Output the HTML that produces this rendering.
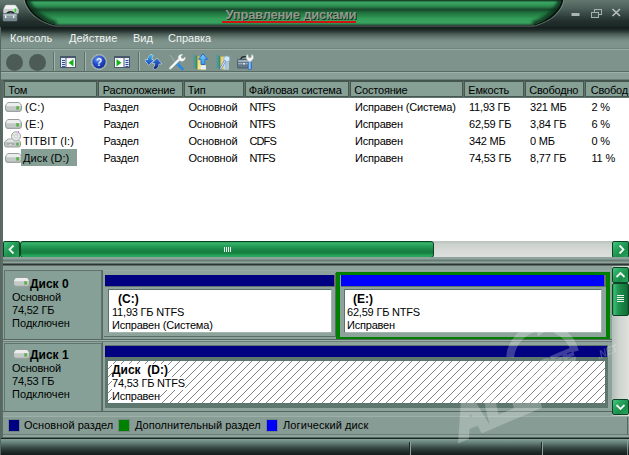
<!DOCTYPE html>
<html lang="ru">
<head>
<meta charset="utf-8">
<title>Управление дисками</title>
<style>
html,body{margin:0;padding:0;}
body{width:629px;height:455px;overflow:hidden;position:relative;background:#7d938c;
  font-family:"Liberation Sans","DejaVu Sans",sans-serif;font-size:11px;color:#000;letter-spacing:-0.2px;}
.abs,.abs-all *{position:absolute;}
div,span,svg{position:absolute;box-sizing:border-box;}
.t{white-space:nowrap;line-height:13px;height:13px;}

/* title bar */
#title{left:0;top:0;width:629px;height:27px;background:linear-gradient(180deg,#63776f 0%,#4f625c 28%,#33433f 58%,#222e2b 80%,#1d2926 96%,#161f1d 100%);}
#menugrad{left:0;top:27px;width:629px;height:16px;background:linear-gradient(180deg,#131c1a 0,#1f2b28 3px,#33423e 5px,#4a5a55 7px,#64776f 10px,#778d86 13px,#7d938c 16px);}
#titletext{left:225.5px;top:7px;font-weight:bold;font-size:13px;color:#8f9a8b;letter-spacing:-0.25px;line-height:15px;text-shadow:1px 1px 0 #15301f;}
#titleline{left:222px;top:21px;width:134px;height:2px;background:#d0140f;}

/* menu */
.menu{top:32px;color:#eef3f1;letter-spacing:0;}

/* toolbar */
#tbtop{left:1px;top:48px;width:628px;height:2px;background:linear-gradient(180deg,#6f847d 0,#6f847d 1px,#99ada5 1px,#99ada5 2px);}
#tbbot{left:1px;top:71px;width:628px;height:9px;background:linear-gradient(180deg,#586a64 0,#586a64 1px,#9db1a9 1px,#9db1a9 2px,#889e96 2px,#889e96 8px,#6a7e77 8px);}
.vsep{top:52px;width:2px;height:19px;border-left:1px solid #5d706a;border-right:1px solid #a3b5ae;}
.circ{top:54px;width:17px;height:17px;border-radius:50%;background:#4d5b57;}

/* frame */
#lframe{left:0;top:27px;width:1px;height:428px;background:#55675f;}
#lframe2{left:1px;top:80px;width:2px;height:357px;background:#5a6a65;}

/* list */
#listframe{left:2px;top:80px;width:627px;height:177px;background:#43534f;}
#listwhite{left:3px;top:98px;width:626px;height:143px;background:#fff;}
#hdr{left:3px;top:81px;width:626px;height:17px;background:#60746d;}
.hc{top:81px;height:16px;border:1px solid #46574f;background:#86a096;}
.hc span{left:4px;top:2px;line-height:13px;white-space:nowrap;}
.row{left:4px;width:625px;height:17px;}
.c{white-space:nowrap;line-height:13px;}

/* scrollbar h */
#hs{left:3px;top:241px;width:626px;height:16px;background:linear-gradient(180deg,#b9c2bc 0%,#cbd1cc 20%,#d6dad6 55%,#dcdfdb 100%);}
.gbtn{background:linear-gradient(180deg,#2a9c58 0%,#34b069 10%,#249a55 30%,#188344 55%,#167f40 72%,#20994f 86%,#2cb565 95%,#1a8a48 100%);border:1px solid #0a4224;border-radius:2px;}

.vbtn{background:linear-gradient(90deg,#2a9c58 0%,#39b970 10%,#249a55 30%,#198645 55%,#157b3e 75%,#127238 90%,#0e5e2e 100%);border:1px solid #0a4224;border-radius:2px;}
/* graphical */
.sq{background:linear-gradient(135deg,#45c983 0%,#2aa760 30%,#1b8c49 65%,#27a85e 100%) !important;}
.panel{background:#86a097;border:1px solid #5f746d;}
.bold{font-weight:bold;}
</style>
</head>
<body>

<!-- ===== title bar ===== -->
<div id="title">
  <svg width="629" height="27" viewBox="0 0 629 27" style="left:0;top:0">
    <defs>
      <clipPath id="pclip"><path d="M26.500 -1 C 28 8, 37 19, 56 25 L 533 25 C 550 19, 560 9, 561.500 -1 Z"/></clipPath>
      <filter id="pblur" x="-5%" y="-50%" width="110%" height="200%"><feGaussianBlur stdDeviation="1.600"/></filter>
      <linearGradient id="pg" x1="0" y1="0" x2="0" y2="26" gradientUnits="userSpaceOnUse">
        <stop offset="0" stop-color="#102a1c"/>
        <stop offset="0.04" stop-color="#1f6238"/>
        <stop offset="0.08" stop-color="#38a360"/>
        <stop offset="0.15" stop-color="#37a05d"/>
        <stop offset="0.23" stop-color="#2d8a50"/>
        <stop offset="0.31" stop-color="#226b40"/>
        <stop offset="0.35" stop-color="#184a2b"/>
        <stop offset="0.4" stop-color="#1a5230"/>
        <stop offset="0.5" stop-color="#217541"/>
        <stop offset="0.62" stop-color="#288a4a"/>
        <stop offset="0.73" stop-color="#36a05b"/>
        <stop offset="0.88" stop-color="#38a35e"/>
        <stop offset="0.94" stop-color="#2a7046"/>
        <stop offset="1" stop-color="#16392a"/>
      </linearGradient>
    </defs>
    <path d="M23.500 -1 C 25 9, 34 21, 55 26.500 L 534 26.500 C 554 21, 563 10, 564.500 -1 Z" fill="#8fa59b" opacity="0.600"/>
    <path d="M24.500 -1 C 26 9, 35 20, 54 25.600 L 535 25.600 C 553 20, 562 10, 563.500 -1 Z" fill="#07150e"/>
    <path d="M26.500 -1 C 28 8, 37 19, 56 25 L 533 25 C 550 19, 560 9, 561.500 -1 Z" fill="url(#pg)"/>
    <g clip-path="url(#pclip)"><path d="M26.500 -1 C 28 8, 37 19, 56 25 M 533 25 C 550 19, 560 9, 561.500 -1" fill="none" stroke="#0b2e1a" stroke-width="7" filter="url(#pblur)" opacity="0.850"/></g>
  </svg>
  <div id="titletext" class="t">Управление дисками</div>
  <div id="titleline"></div>
  <!-- app icon -->
  <svg width="18" height="18" viewBox="0 0 18 18" style="left:2px;top:4px">
    <path d="M4.500 1 h8 q1.200 0 1.800 1 l2.200 3.500 v3 q0 1 -1 1 h-13 q-1 0 -1 -1 v-3 l1.700 -3.500 q0.600 -1 1.300 -1 z" fill="#d9dcdc" stroke="#9aa3a2" stroke-width="0.700"/>
    <path d="M4.600 1.300 h7.800 q1 0 1.500 0.800 l1.600 2.700 h-13.500 l1.400 -2.700 q0.400 -0.800 1.200 -0.800 z" fill="#f1f2f2"/>
    <rect x="1.700" y="5" width="14.600" height="3.800" fill="#c9cdd0"/>
    <rect x="12.500" y="4.500" width="1.700" height="3.600" fill="#2fd22f"/>
    <path d="M4.500 9.500 q4 -3.600 8 0" fill="none" stroke="#141a1a" stroke-width="1.300"/>
    <rect x="1" y="9.500" width="14" height="7.500" rx="0.800" fill="#8a9aa3" stroke="#5d6d75" stroke-width="0.800"/>
    <rect x="1.500" y="10" width="13" height="2" fill="#a9b7be"/>
    <rect x="1.500" y="14.500" width="13" height="2" fill="#74858e"/>
    <rect x="3" y="11.500" width="1.300" height="2.500" fill="#eef1f2"/>
    <rect x="11" y="11.500" width="1.300" height="2.500" fill="#eef1f2"/>
  </svg>
  <!-- window buttons -->
  <svg width="60" height="20" viewBox="0 0 60 20" style="left:565px;top:3px">
    <rect x="6.500" y="10" width="8" height="3" fill="#aab5b2"/>
    <rect x="29.500" y="6.500" width="7" height="5" fill="none" stroke="#a5b1ae" stroke-width="1"/>
    <rect x="26.500" y="9.500" width="7" height="5" fill="#3e4f4a" stroke="#a5b1ae" stroke-width="1"/>
    <path d="M47.500 6 l7.500 7 M55 6 l-7.500 7" stroke="#b9c4c1" stroke-width="1.500" fill="none"/>
  </svg>
</div>
<div id="menugrad"></div>

<!-- ===== menu ===== -->
<div class="t menu" style="left:10px">Консоль</div>
<div class="t menu" style="left:69px">Действие</div>
<div class="t menu" style="left:133px">Вид</div>
<div class="t menu" style="left:168px">Справка</div>

<!-- ===== toolbar ===== -->
<div id="tbtop"></div>
<div id="tbbot"></div>
<div class="circ" style="left:6px"></div>
<div class="circ" style="left:29px"></div>
<div class="vsep" style="left:53px"></div>
<div class="vsep" style="left:84px"></div>
<div class="vsep" style="left:138px"></div>

<!-- show/hide tree icon -->
<svg width="16" height="12" viewBox="0 0 16 12" style="left:60px;top:56px">
  <rect x="0.5" y="0.5" width="15" height="11" fill="#fff" stroke="#49586c"/>
  <rect x="0.5" y="0.5" width="15" height="1.6" fill="#49586c"/>
  <rect x="1" y="2" width="4.500" height="9" fill="#e3e9f5"/>
  <rect x="5.500" y="2" width="1" height="9" fill="#49586c"/>
  <rect x="2" y="4" width="3" height="1" fill="#2d4ea8"/><rect x="2" y="6" width="3" height="1" fill="#2d4ea8"/><rect x="2" y="8" width="3" height="1" fill="#2d4ea8"/><rect x="2" y="10" width="3" height="1" fill="#2d4ea8"/>
  <path d="M13.500 3 v7.500 l-5 -3.750 z" fill="#12b317"/>
</svg>
<!-- help icon -->
<svg width="18" height="18" viewBox="0 0 18 18" style="left:90px;top:53px">
  <defs><radialGradient id="hg" cx="0.400" cy="0.300" r="0.800"><stop offset="0" stop-color="#6a98f2"/><stop offset="0.500" stop-color="#1f4cca"/><stop offset="1" stop-color="#0a2288"/></radialGradient></defs>
  <circle cx="9" cy="9" r="7.600" fill="#9aa7a8" stroke="#c5ced0" stroke-width="0.800" stroke-dasharray="1.500 1"/>
  <circle cx="9" cy="9" r="6.500" fill="url(#hg)"/>
  <text x="9" y="12.600" font-family="Liberation Sans,sans-serif" font-weight="bold" font-size="10" fill="#f4f8ff" text-anchor="middle">?</text>
</svg>
<!-- action pane icon -->
<svg width="16" height="12" viewBox="0 0 16 12" style="left:114px;top:56px">
  <rect x="0.500" y="0.500" width="15" height="11" fill="#fff" stroke="#49586c"/>
  <rect x="0.500" y="0.500" width="15" height="1.600" fill="#49586c"/>
  <rect x="10.500" y="2" width="4.500" height="9" fill="#e3e9f5"/>
  <rect x="9.500" y="2" width="1" height="9" fill="#49586c"/>
  <rect x="11.500" y="4" width="3" height="1" fill="#2d4ea8"/><rect x="11.500" y="6" width="3" height="1" fill="#2d4ea8"/><rect x="11.500" y="8" width="3" height="1" fill="#2d4ea8"/><rect x="11.500" y="10" width="3" height="1" fill="#2d4ea8"/>
  <path d="M2.500 3 v7.500 l5 -3.750 z" fill="#12b317"/>
</svg>
<!-- refresh icon -->
<svg width="20" height="18" viewBox="0 0 20 18" style="left:143px;top:53px">
  <defs>
    <linearGradient id="ra" x1="0" y1="0" x2="0" y2="1"><stop offset="0" stop-color="#3fc0f0"/><stop offset="0.500" stop-color="#2a78d8"/><stop offset="1" stop-color="#1c4cb4"/></linearGradient>
    <linearGradient id="rb" x1="0" y1="0" x2="0" y2="1"><stop offset="0" stop-color="#2c6cd8"/><stop offset="0.600" stop-color="#1a48b0"/><stop offset="1" stop-color="#081c70"/></linearGradient>
  </defs>
  <path d="M8 1.500 L10 2.500 Q8.300 4.500 8.700 6.800 L10.800 7.300 L5.600 12 L2 7 L4.800 7 Q4.800 3.500 8 1.500 Z" fill="url(#ra)" stroke="#e9f1f6" stroke-width="1" stroke-linejoin="round" paint-order="stroke"/>
  <path d="M14 5.500 L18.500 10.800 L15.800 10.700 Q15.600 14.800 11.600 16.200 L10.400 14.600 Q12.400 13.200 12.300 10.500 L9.500 10.300 Z" fill="url(#rb)" stroke="#e9f1f6" stroke-width="1" stroke-linejoin="round" paint-order="stroke"/>
</svg>
<!-- tools icon -->
<svg width="18" height="18" viewBox="0 0 18 18" style="left:168px;top:53px">
  <path d="M2.200 2.200 L8.500 10.500" stroke="#aab3b1" stroke-width="0.900"/>
  <path d="M8.500 10 L14.500 16" stroke="#2a86de" stroke-width="2.600" stroke-linecap="round"/>
  <path d="M8.200 9.800 L9.800 11.300" stroke="#8ec6f2" stroke-width="1"/>
  <path d="M2.300 15.300 L11.800 5.800" stroke="#fafbfb" stroke-width="2.300" stroke-linecap="round"/>
  <path d="M10.200 4.300 a3.400 3.400 0 0 1 4.600 -2.700 l-1.900 1.900 l0.500 1.800 l1.800 0.500 l1.900 -1.900 a3.400 3.400 0 0 1 -3.700 4.400 l-1.500 -0.500 l-1.200 -1.200 z" fill="#fafbfb" stroke="#c4cccb" stroke-width="0.400"/>
  <circle cx="2.800" cy="14.900" r="0.500" fill="#9aa5a3"/>
</svg>
<!-- export icon -->
<svg width="18" height="18" viewBox="0 0 18 18" style="left:193px;top:53px">
  <defs><linearGradient id="sp" x1="0" y1="0" x2="1" y2="0"><stop offset="0" stop-color="#4d8fc4"/><stop offset="0.350" stop-color="#4fa182"/><stop offset="1" stop-color="#2f7d5c"/></linearGradient>
  <linearGradient id="pgy" x1="0" y1="0" x2="0" y2="1"><stop offset="0" stop-color="#f0d24e"/><stop offset="1" stop-color="#f6e9a4"/></linearGradient>
  <linearGradient id="ar" x1="0" y1="0" x2="0" y2="1"><stop offset="0" stop-color="#7cc8fa"/><stop offset="1" stop-color="#3a9af0"/></linearGradient></defs>
  <path d="M0.500 1.500 l4 1.500 v13.500 l-4 -1.500 z" fill="url(#sp)"/>
  <rect x="4.500" y="3.500" width="8" height="13" fill="url(#pgy)" stroke="#c5a93c" stroke-width="0.500"/>
  <rect x="8" y="12.500" width="5" height="4" fill="#e6eef8"/>
  <path d="M10 0.800 l4.600 5.400 h-2.600 v5.300 h-4 v-5.300 h-2.600 z" fill="url(#ar)" stroke="#1a66cc" stroke-width="0.900" stroke-linejoin="round"/>
</svg>
<!-- properties/browse icon -->
<svg width="18" height="18" viewBox="0 0 18 18" style="left:216px;top:53px">
  <path d="M0.500 1.500 l4 1.500 v13.500 l-4 -1.500 z" fill="url(#sp)"/>
  <rect x="4.500" y="3.500" width="8" height="13" fill="#e6d27c" stroke="#b9a552" stroke-width="0.500"/>
  <rect x="8" y="8" width="5" height="8.500" fill="#c9dbf2"/>
  <rect x="9.500" y="8" width="1" height="8.500" fill="#7ea6dc"/><rect x="11.500" y="8" width="1" height="8.500" fill="#8fc49a"/>
  <circle cx="10.800" cy="6" r="3" fill="#d3e9f9" stroke="#8cb2d8" stroke-width="0.900"/>
  <path d="M8.800 8.300 L4.800 15.500" stroke="#5f86c6" stroke-width="2.200" stroke-linecap="round"/>
  <path d="M8.800 8.300 L4.800 15.500" stroke="#eef3fa" stroke-width="0.900" stroke-linecap="round"/>
</svg>
<!-- toolbox icon -->
<svg width="20" height="18" viewBox="0 0 20 18" style="left:237px;top:53px">
  <path d="M3.800 7 q0 -3.300 3.700 -3.300 q3.700 0 3.700 3.300" fill="none" stroke="#1d2528" stroke-width="1.300"/>
  <rect x="0.500" y="6.500" width="13" height="8.500" rx="0.800" fill="#63788a" stroke="#44545f" stroke-width="0.800"/>
  <rect x="1" y="7" width="12" height="2" fill="#9db0be"/>
  <rect x="1" y="10.300" width="12" height="0.900" fill="#b9c7d1"/>
  <rect x="5.800" y="9.600" width="2.300" height="2.300" fill="#dfe6ea" stroke="#4a5a65" stroke-width="0.400"/>
  <path d="M11.300 8 h3 l0.300 8 q-1.800 1.400 -3.600 0 z" fill="#5d9fe6" stroke="#2a5fae" stroke-width="0.700"/>
  <rect x="12.300" y="8.500" width="0.900" height="7.500" fill="#a9d0f6"/>
  <path d="M10.800 1.200 l0.600 3 l1.400 0.800 l1.400 -0.800 l0.600 -3 q1.700 1 1.700 3 q0 2.300 -2 3.300 v1 h-3.400 v-1 q-2 -1 -2 -3.300 q0 -2 1.700 -3 z" fill="#f4f6f6" stroke="#aeb9b7" stroke-width="0.500"/>
</svg>

<!-- ===== volume list ===== -->
<div id="listframe"></div>
<div id="hdr"></div>
<div class="hc" style="left:4px;width:93px"><span style="left:3.3px">Том</span></div>
<div class="hc" style="left:98px;width:85px"><span style="left:3.8px">Расположение</span></div>
<div class="hc" style="left:184px;width:60px"><span style="left:2.8px">Тип</span></div>
<div class="hc" style="left:245px;width:104px"><span style="left:2.8px">Файловая система</span></div>
<div class="hc" style="left:350px;width:113px"><span style="left:3.3px">Состояние</span></div>
<div class="hc" style="left:464px;width:60px"><span style="left:3.3px">Емкость</span></div>
<div class="hc" style="left:525px;width:59px"><span style="left:3.3px">Свободно</span></div>
<div class="hc" style="left:585px;width:50px"><span style="left:4.8px">Свобод</span></div>
<div id="listwhite"></div>
<svg width="17" height="10" viewBox="0 0 17 10" style="left:5px;top:102px"><path d="M4 0.500 h9 q1.500 0 2.300 1.200 l1.200 2 v3.300 q0 2.500 -2.500 2.500 h-11 q-2.500 0 -2.500 -2.500 v-3.300 l1.200 -2 q0.800 -1.200 2.300 -1.200 z" fill="#c3c9c7" stroke="#8d9693" stroke-width="0.900"/><path d="M4 1 h9 q1.200 0 1.900 1 l0.900 1.500 q-0.600 0.700 -1.800 0.700 h-11 q-1.200 0 -1.800 -0.700 l0.900 -1.500 q0.700 -1 1.900 -1 z" fill="#eceeed"/><path d="M1.200 7.300 q0 1.700 1.800 1.700 h11 q1.800 0 1.800 -1.700" fill="none" stroke="#a5adab" stroke-width="0.800"/><rect x="11.600" y="4.700" width="2.200" height="2.500" fill="#1fcf26" stroke="#8a9860" stroke-width="0.500"/></svg>
<div class="t c" style="left:25px;top:101px;letter-spacing:0.35px">(C:)</div>
<div class="t c" style="left:103.5px;top:101px">Раздел</div>
<div class="t c" style="left:188.5px;top:101px">Основной</div>
<div class="t c" style="left:249.5px;top:101px;letter-spacing:-0.9px">NTFS</div>
<div class="t c" style="left:355px;top:101px">Исправен (Система)</div>
<div class="t c" style="left:469px;top:101px">11,93 ГБ</div>
<div class="t c" style="left:530px;top:101px">321 МБ</div>
<div class="t c" style="left:591.5px;top:101px">2 %</div>
<svg width="17" height="10" viewBox="0 0 17 10" style="left:5px;top:119px"><path d="M4 0.500 h9 q1.500 0 2.300 1.200 l1.200 2 v3.300 q0 2.500 -2.500 2.500 h-11 q-2.500 0 -2.500 -2.500 v-3.300 l1.200 -2 q0.800 -1.200 2.300 -1.200 z" fill="#c3c9c7" stroke="#8d9693" stroke-width="0.900"/><path d="M4 1 h9 q1.200 0 1.900 1 l0.900 1.500 q-0.600 0.700 -1.800 0.700 h-11 q-1.200 0 -1.800 -0.700 l0.900 -1.500 q0.700 -1 1.900 -1 z" fill="#eceeed"/><path d="M1.200 7.300 q0 1.700 1.800 1.700 h11 q1.800 0 1.800 -1.700" fill="none" stroke="#a5adab" stroke-width="0.800"/><rect x="11.600" y="4.700" width="2.200" height="2.500" fill="#1fcf26" stroke="#8a9860" stroke-width="0.500"/></svg>
<div class="t c" style="left:25px;top:118px;letter-spacing:0.35px">(E:)</div>
<div class="t c" style="left:103.5px;top:118px">Раздел</div>
<div class="t c" style="left:188.5px;top:118px">Основной</div>
<div class="t c" style="left:249.5px;top:118px;letter-spacing:-0.9px">NTFS</div>
<div class="t c" style="left:355px;top:118px">Исправен</div>
<div class="t c" style="left:469px;top:118px">62,59 ГБ</div>
<div class="t c" style="left:530px;top:118px">3,84 ГБ</div>
<div class="t c" style="left:591.5px;top:118px">6 %</div>
<svg width="18" height="17" viewBox="0 0 18 17" style="left:4px;top:131px"><path d="M4 8 h9.500 l3 3 v3 q0 2 -2 2 h-12 q-2 0 -2 -2 v-3 z" fill="#c3c9c7" stroke="#8d9693" stroke-width="0.900"/><path d="M4.300 8.500 h9 l2.400 2.300 h-14 z" fill="#e6e9e8"/><rect x="2.500" y="12.500" width="8" height="1" fill="#8d9693"/><rect x="5.500" y="13.300" width="2" height="0.700" fill="#f4f6f5"/><rect x="12.500" y="12" width="2" height="2.300" fill="#1fcf26" stroke="#8a9860" stroke-width="0.500"/><circle cx="12" cy="5.300" r="4.600" fill="#e3e6e8" stroke="#98a19e" stroke-width="0.900"/><circle cx="12" cy="5.300" r="1.500" fill="#fafbfb" stroke="#aab2b0" stroke-width="0.600"/><path d="M12 0.700 a4.600 4.600 0 0 1 3.500 1.800 l-2.400 1.800 z" fill="#d9c7e6" opacity="0.700"/><rect x="14" y="0.300" width="1" height="1" fill="#ff20e0"/><rect x="8.500" y="3.300" width="1" height="1" fill="#d8c040"/></svg>
<div class="t c" style="left:23px;top:135px;letter-spacing:0.1px">TITBIT (I:)</div>
<div class="t c" style="left:103.5px;top:135px">Раздел</div>
<div class="t c" style="left:188.5px;top:135px">Основной</div>
<div class="t c" style="left:249.5px;top:135px;letter-spacing:-0.9px">CDFS</div>
<div class="t c" style="left:355px;top:135px">Исправен</div>
<div class="t c" style="left:469px;top:135px">342 МБ</div>
<div class="t c" style="left:530px;top:135px">0 МБ</div>
<div class="t c" style="left:591.5px;top:135px">0 %</div>
<div style="left:21px;top:149px;width:56px;height:17px;background:#86a096"></div>
<svg width="17" height="10" viewBox="0 0 17 10" style="left:5px;top:153px"><path d="M4 0.500 h9 q1.500 0 2.300 1.200 l1.200 2 v3.300 q0 2.500 -2.500 2.500 h-11 q-2.500 0 -2.500 -2.500 v-3.300 l1.200 -2 q0.800 -1.200 2.300 -1.200 z" fill="#c3c9c7" stroke="#8d9693" stroke-width="0.900"/><path d="M4 1 h9 q1.200 0 1.900 1 l0.900 1.500 q-0.600 0.700 -1.800 0.700 h-11 q-1.200 0 -1.800 -0.700 l0.900 -1.500 q0.700 -1 1.900 -1 z" fill="#eceeed"/><path d="M1.200 7.300 q0 1.700 1.800 1.700 h11 q1.800 0 1.800 -1.700" fill="none" stroke="#a5adab" stroke-width="0.800"/><rect x="11.600" y="4.700" width="2.200" height="2.500" fill="#1fcf26" stroke="#8a9860" stroke-width="0.500"/></svg>
<div class="t c" style="left:23px;top:152px;letter-spacing:0.12px">Диск (D:)</div>
<div class="t c" style="left:103.5px;top:152px">Раздел</div>
<div class="t c" style="left:188.5px;top:152px">Основной</div>
<div class="t c" style="left:249.5px;top:152px;letter-spacing:-0.9px">NTFS</div>
<div class="t c" style="left:355px;top:152px">Исправен</div>
<div class="t c" style="left:469px;top:152px">74,53 ГБ</div>
<div class="t c" style="left:530px;top:152px">8,77 ГБ</div>
<div class="t c" style="left:591.5px;top:152px">11 %</div>

<!-- ===== horizontal scrollbar ===== -->
<div id="hs"></div>
<div class="gbtn sq" style="left:3px;top:241px;width:17px;height:17px"></div>
<svg width="9" height="11" viewBox="0 0 9 11" style="left:7px;top:244px"><path d="M6.500 1.500 L2.500 5.500 L6.500 9.500" fill="none" stroke="#eef4f0" stroke-width="1.800"/></svg>
<div class="gbtn" style="left:20px;top:241px;width:414px;height:17px;border-radius:3px"></div>
<div style="left:224px;top:247px;width:1px;height:5px;background:#eaf3ee"></div>
<div style="left:226px;top:247px;width:1px;height:5px;background:#eaf3ee"></div>
<div style="left:228px;top:247px;width:1px;height:5px;background:#eaf3ee"></div>
<div style="left:230px;top:247px;width:1px;height:5px;background:#eaf3ee"></div>
<div class="gbtn sq" style="left:612px;top:241px;width:17px;height:17px"></div>
<svg width="9" height="11" viewBox="0 0 9 11" style="left:617px;top:244px"><path d="M2.500 1.500 L6.500 5.500 L2.500 9.500" fill="none" stroke="#eef4f0" stroke-width="1.800"/></svg>

<!-- ===== splitter ===== -->
<div style="left:3px;top:257px;width:626px;height:9px;background:linear-gradient(180deg,#8ea39b 0px,#8ea39b 1px,#8ea39b 1px,#8ea39b 2px,#7b9088 2px,#7b9088 3px,#677c75 3px,#677c75 4px,#7b9088 4px,#7b9088 5px,#8ea39b 5px,#8ea39b 6px,#5d6c67 6px,#5d6c67 7px,#2b3532 7px,#2b3532 8px,#5d6c67 8px,#5d6c67 9px)"></div>

<!-- ===== graphical view ===== -->
<div style="left:3px;top:266px;width:609px;height:150px;background:#8ea39b"></div>
<div style="left:3px;top:270px;width:609px;height:1px;background:#98aba4"></div>
<!-- disk 0 -->
<div class="panel" style="left:4px;top:270px;width:98px;height:71px"></div>
<div style="left:102px;top:270px;width:1px;height:142px;background:#55675f"></div>
<div style="left:3px;top:339px;width:609px;height:3px;background:linear-gradient(180deg,#55675f 0,#55675f 1px,#9db1a9 1px,#9db1a9 2px,#6a7d76 2px,#6a7d76 3px)"></div>
<svg width="17" height="10" viewBox="0 0 17 10" style="left:13px;top:277px"><path d="M4 0.500 h9 q1.500 0 2.300 1.200 l1.200 2 v3.300 q0 2.500 -2.500 2.500 h-11 q-2.500 0 -2.500 -2.500 v-3.300 l1.200 -2 q0.800 -1.200 2.300 -1.200 z" fill="#c3c9c7" stroke="#8d9693" stroke-width="0.900"/><path d="M4 1 h9 q1.200 0 1.900 1 l0.900 1.500 q-0.600 0.700 -1.800 0.700 h-11 q-1.200 0 -1.800 -0.700 l0.900 -1.500 q0.700 -1 1.900 -1 z" fill="#eceeed"/><path d="M1.200 7.300 q0 1.700 1.800 1.700 h11 q1.800 0 1.800 -1.700" fill="none" stroke="#a5adab" stroke-width="0.800"/><rect x="11.600" y="4.700" width="2.200" height="2.500" fill="#1fcf26" stroke="#8a9860" stroke-width="0.500"/></svg>
<div class="t bold" style="left:30px;top:278px;font-size:12px;letter-spacing:0">Диск 0</div>
<div class="t" style="left:12px;top:291px">Основной</div>
<div class="t" style="left:12px;top:304px">74,52 ГБ</div>
<div class="t" style="left:12px;top:317px;letter-spacing:0.05px">Подключен</div>

<!-- partition C -->
<div style="left:104px;top:273px;width:232px;height:64px;border-right:1px solid #5a6d66;border-bottom:1px solid #5a6d66"></div>
<div style="left:105px;top:275px;width:229px;height:11px;background:#000080"></div>
<div style="left:334px;top:275px;width:2px;height:11px;background:#6b6b6b"></div>
<div style="left:105px;top:286px;width:230px;height:1px;background:#5f736c"></div>
<div style="left:108px;top:289px;width:224px;height:44px;background:#fff;border:1px solid #5d716b;border-right-color:#a3b6ae;border-bottom-color:#a3b6ae"></div>
<div class="t bold" style="left:118px;top:293px;font-size:12px;letter-spacing:0">(C:)</div>
<div class="t" style="left:112px;top:306px">11,93 ГБ NTFS</div>
<div class="t" style="left:112px;top:319px">Исправен (Система)</div>

<!-- partition E (selected) -->
<div style="left:336px;top:272px;width:274px;height:67px;border-style:solid;border-color:#008000;border-width:3px 4px 2px 4px"></div>
<div style="left:341px;top:275px;width:263px;height:11px;background:#0000ff"></div>
<div style="left:604px;top:275px;width:2px;height:11px;background:#6b6b6b"></div>
<div style="left:341px;top:286px;width:265px;height:1px;background:#5f736c"></div>
<div style="left:344px;top:289px;width:258px;height:44px;background:#fff;border:1px solid #5d716b;border-right-color:#a3b6ae;border-bottom-color:#a3b6ae"></div>
<div class="t bold" style="left:353px;top:293px;font-size:12px;letter-spacing:0">(E:)</div>
<div class="t" style="left:347px;top:306px">62,59 ГБ NTFS</div>
<div class="t" style="left:347px;top:319px">Исправен</div>

<!-- disk 1 -->
<div class="panel" style="left:4px;top:343px;width:98px;height:69px"></div>
<svg width="17" height="10" viewBox="0 0 17 10" style="left:13px;top:349px"><path d="M4 0.500 h9 q1.500 0 2.300 1.200 l1.200 2 v3.300 q0 2.500 -2.500 2.500 h-11 q-2.500 0 -2.500 -2.500 v-3.300 l1.200 -2 q0.800 -1.200 2.300 -1.200 z" fill="#c3c9c7" stroke="#8d9693" stroke-width="0.900"/><path d="M4 1 h9 q1.200 0 1.900 1 l0.900 1.500 q-0.600 0.700 -1.800 0.700 h-11 q-1.200 0 -1.800 -0.700 l0.900 -1.500 q0.700 -1 1.900 -1 z" fill="#eceeed"/><path d="M1.200 7.300 q0 1.700 1.800 1.700 h11 q1.800 0 1.800 -1.700" fill="none" stroke="#a5adab" stroke-width="0.800"/><rect x="11.600" y="4.700" width="2.200" height="2.500" fill="#1fcf26" stroke="#8a9860" stroke-width="0.500"/></svg>
<div class="t bold" style="left:30px;top:349px;font-size:12px;letter-spacing:0">Диск 1</div>
<div class="t" style="left:12px;top:362px">Основной</div>
<div class="t" style="left:12px;top:375px">74,53 ГБ</div>
<div class="t" style="left:12px;top:388px;letter-spacing:0.05px">Подключен</div>

<div style="left:104px;top:344px;width:505px;height:65px;background:#5d776f;border:1px solid #8fa59d"></div>
<div style="left:105px;top:346px;width:502px;height:11px;background:#000080"></div>
<svg width="497" height="42" style="left:108px;top:361px">
  <defs><pattern id="hat" width="8" height="8" patternUnits="userSpaceOnUse">
    <rect width="8" height="8" fill="#fff"/>
    <path d="M0 7h1v1h-1zM1 6h1v1h-1zM2 5h1v1h-1zM3 4h1v1h-1zM4 3h1v1h-1zM5 2h1v1h-1zM6 1h1v1h-1zM7 0h1v1h-1z" fill="#848484"/>
  </pattern></defs>
  <rect width="498" height="43" fill="url(#hat)"/>
</svg>
<div class="t bold" style="left:112px;top:364px;font-size:12px;letter-spacing:0;white-space:pre;background:#fff">Диск  (D:)</div>
<div class="t" style="left:112px;top:377px;background:#fff">74,53 ГБ NTFS</div>
<div class="t" style="left:112px;top:390px;background:#fff">Исправен</div>

<!-- vertical scrollbar -->
<div style="left:612px;top:266px;width:17px;height:150px;background:linear-gradient(90deg,#b4beb8 0%,#cdd3ce 40%,#dfe2dd 100%)"></div>
<div class="vbtn sq" style="left:612px;top:267px;width:17px;height:16px"></div>
<svg width="11" height="8" viewBox="0 0 11 8" style="left:615px;top:271px"><path d="M1.500 6 L5.500 2 L9.500 6" fill="none" stroke="#eef4f0" stroke-width="1.800"/></svg>
<div class="vbtn" style="left:612px;top:283px;width:17px;height:33px;border-radius:2px"></div>
<div style="left:617px;top:295px;width:7px;height:1px;background:#eaf3ee;box-shadow:0 2px 0 #eaf3ee,0 4px 0 #eaf3ee,0 6px 0 #eaf3ee"></div>
<div class="vbtn sq" style="left:612px;top:399px;width:17px;height:16px"></div>
<svg width="11" height="8" viewBox="0 0 11 8" style="left:615px;top:403px"><path d="M1.500 2 L5.500 6 L9.500 2" fill="none" stroke="#eef4f0" stroke-width="1.800"/></svg>

<!-- ===== legend ===== -->
<div style="left:2px;top:411px;width:610px;height:1px;background:#55675f"></div>
<div style="left:2px;top:416px;width:627px;height:1px;background:#9cb0a8"></div>
<div style="left:2px;top:417px;width:627px;height:18px;background:#869c94"></div>
<div style="left:8px;top:419px;width:12px;height:13px;background:#000082;border:1px solid #748780"></div>
<div class="t" style="left:24px;top:419px;letter-spacing:0.02px">Основной раздел</div>
<div style="left:118px;top:419px;width:12px;height:13px;background:#008200;border:1px solid #748780"></div>
<div class="t" style="left:135px;top:419px;letter-spacing:0">Дополнительный раздел</div>
<div style="left:266px;top:419px;width:12px;height:13px;background:#0000fa;border:1px solid #748780"></div>
<div class="t" style="left:283px;top:419px;letter-spacing:0.1px">Логический диск</div>

<!-- ===== status bar ===== -->
<div style="left:0;top:434px;width:629px;height:1px;background:#6a7e77"></div>
<div style="left:0;top:435px;width:629px;height:2px;background:#8ea39b"></div>
<div style="left:0;top:437px;width:629px;height:18px;background:linear-gradient(180deg,#56675f 0,#56675f 1px,#1a2421 1px,#1a2421 2px,#85a097 2px,#7d9890 3px,#637d76 6px,#475b55 9px,#303f3c 12px,#1f2a28 15px,#151e1c 18px)"></div>
<div style="left:409px;top:442px;width:2px;height:13px;border-left:1px solid #1c2825;border-right:1px solid #8ea39b"></div>
<div style="left:541px;top:442px;width:2px;height:13px;border-left:1px solid #1c2825;border-right:1px solid #8ea39b"></div>

<div style="left:627px;top:417px;width:1px;height:18px;background:#55655f"></div>
<div style="left:627px;top:439px;width:1px;height:16px;background:#8fa59c;opacity:0.8"></div>
<!-- ===== watermark ===== -->
<svg width="629" height="455" viewBox="0 0 629 455" style="left:0;top:0;pointer-events:none" opacity="0.240">
  <g fill="#ffffff" font-family="Liberation Sans,sans-serif" font-weight="bold" font-style="italic">
    <g transform="translate(460,441) rotate(-23)">
      <text x="2" y="-1" font-size="50" textLength="88" lengthAdjust="spacingAndGlyphs" stroke="#fff" stroke-width="5" stroke-linejoin="miter">ALL</text>
      <text x="89" y="-30" font-size="17" textLength="50" lengthAdjust="spacingAndGlyphs" stroke="#fff" stroke-width="2">FREE</text>
      <text x="94" y="-14" font-size="17" textLength="45" lengthAdjust="spacingAndGlyphs" stroke="#fff" stroke-width="2">LOAD</text>
      <text x="160" y="-21" font-size="11" textLength="21" lengthAdjust="spacingAndGlyphs">.NET</text>
    </g>
    <path d="M510.1 357.1 A33 33 0 0 1 537.3 327.5" fill="none" stroke="#fff" stroke-width="8"/>
    <path d="M534.3 318.9 L550.4 327.8 L538.0 336.5 Z"/>
    <path d="M555.4 329.4 A33 33 0 0 1 574.9 351.5" fill="none" stroke="#fff" stroke-width="8"/>
  </g>
</svg>

<!-- frame -->
<div id="lframe"></div><div id="lframe2"></div>

</body>
</html>
